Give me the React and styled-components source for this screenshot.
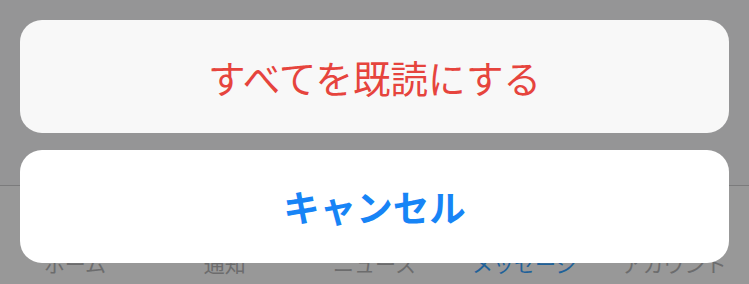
import React from 'react'
import styled, { createGlobalStyle } from 'styled-components'

const GlobalStyle = createGlobalStyle`
  html, body {
    margin: 0;
    padding: 0;
    background: #959596;
  }
  body {
    font-family: "Noto Sans CJK JP", "Noto Sans", sans-serif;
  }
`;

const Screen = styled.div`
  position: relative;
  width: 749px;
  height: 284px;
  overflow: hidden;
  display: flex;
  flex-direction: column;
  background: #959596;
`;

const Content = styled.div`
  flex: 1;
`;

const TabBar = styled.div`
  height: 99px;
  border-top: 1px solid #7b7b7c;
  background: #989898;
  display: grid;
  grid-template-columns: repeat(5, 1fr);
  align-items: end;
  padding-bottom: 10px;
  box-sizing: border-box;
`;

const TabLabel = styled.div`
  text-align: center;
  font-size: 21px;
  line-height: 1;
  color: ${props => props.active ? '#1f6199' : '#6c6c6d'};
`;

const Sheet = styled.div`
  position: absolute;
  inset: 0;
  padding: 20px 20px 0;
  display: flex;
  flex-direction: column;
  gap: 17px;
`;

const Action = styled.button`
  height: 113px;
  width: 100%;
  border: none;
  border-radius: 22px;
  background: ${props => props.cancel ? '#ffffff' : '#f8f8f8'};
  color: ${props => props.destructive ? '#e6443d' : '#1784f6'};
  font-family: "Noto Sans CJK JP", "Noto Sans", sans-serif;
  font-size: ${props => props.cancel ? '36.5px' : '37.5px'};
  font-weight: ${props => props.cancel ? 700 : 400};
  display: flex;
  align-items: center;
  justify-content: center;
  padding: 0;
  cursor: pointer;
`;

const tabs = ['ホーム', '通知', 'ニュース', 'メッセージ', 'アカウント'];

export default function App() {
  return (
    <Screen>
      <GlobalStyle />
      <Content />
      <TabBar>
        {tabs.map((t, i) => (
          <TabLabel key={t} active={i === 3}>{t}</TabLabel>
        ))}
      </TabBar>
      <Sheet>
        <Action destructive>すべてを既読にする</Action>
        <Action cancel>キャンセル</Action>
      </Sheet>
    </Screen>
  )
}
